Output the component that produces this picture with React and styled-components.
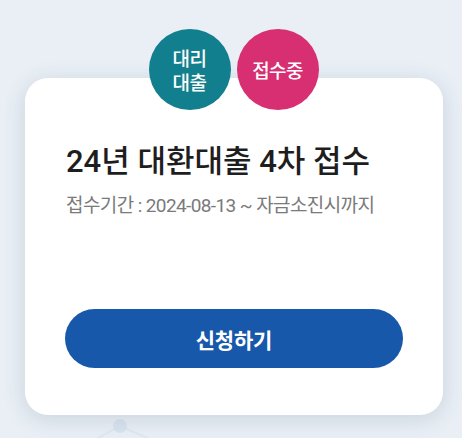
import React from "react";
import styled, { createGlobalStyle } from "styled-components";

const Global = createGlobalStyle`
  html, body {
    margin: 0;
    padding: 0;
    background: #e9eff5;
  }
  body {
    font-family: Roboto, "Noto Sans CJK KR", sans-serif;
    -webkit-font-smoothing: antialiased;
  }
`;

const Page = styled.div`
  position: relative;
  width: 462px;
  height: 438px;
  overflow: hidden;
  padding-top: 29px;
  box-sizing: border-box;
  background: #e9eff5;
`;

const BadgeRow = styled.div`
  position: relative;
  z-index: 2;
  display: flex;
  justify-content: center;
  gap: 6px;
  padding-left: 5px;
  margin: 0 0 -32px 0;
`;

const Badge = styled.div`
  width: 82px;
  height: 81px;
  border-radius: 50%;
  background: ${(p) => p.$color};
  color: #fff;
  display: flex;
  flex-direction: column;
  align-items: center;
  justify-content: center;
  text-align: center;
  font-family: "Noto Sans CJK KR", sans-serif;
  font-weight: 500;
  font-size: 19px;
  line-height: 24px;
  letter-spacing: -0.6px;
`;

const BadgeLine = styled.span`
  display: block;
`;

const Card = styled.div`
  position: relative;
  z-index: 1;
  margin-left: 25px;
  width: 418px;
  height: 337px;
  box-sizing: border-box;
  background: #fff;
  border-radius: 23px;
  box-shadow: 0 4px 22px rgba(40, 60, 100, 0.16);
  padding: 64px 40px 47px 41px;
  display: flex;
  flex-direction: column;
`;

const Title = styled.h2`
  margin: 0;
  font-family: Roboto, "Noto Sans CJK KR", sans-serif;
  font-weight: 500;
  font-size: 31px;
  line-height: 40px;
  color: #1e1e1e;
  letter-spacing: 0;
`;

const Period = styled.p`
  margin: 12px 0 0 0;
  font-family: Roboto, "Noto Sans CJK KR", sans-serif;
  font-weight: 400;
  font-size: 19px;
  line-height: 24px;
  color: #7a7a7a;
  letter-spacing: -0.6px;
`;

const Spacer = styled.div`
  flex: 1;
`;

const ApplyButton = styled.button`
  width: 338px;
  height: 59px;
  margin-left: -1px;
  border: none;
  border-radius: 30px;
  background: #1858aa;
  color: #fff;
  font-family: "Noto Sans CJK KR", sans-serif;
  font-weight: 700;
  font-size: 21px;
  letter-spacing: -0.2px;
  cursor: pointer;
`;

const Deco = styled.svg`
  position: absolute;
  left: 60px;
  bottom: -10px;
  z-index: 0;
`;

export default function App() {
  return (
    <>
      <Global />
      <Page>
        <Deco width="160" height="40" viewBox="0 0 160 40">
          <line x1="20" y1="40" x2="60" y2="18" stroke="#dfe8f0" strokeWidth="2" />
          <line x1="60" y1="18" x2="110" y2="40" stroke="#dfe8f0" strokeWidth="2" />
          <circle cx="60" cy="18" r="7" fill="#d9e4ee" />
        </Deco>
        <BadgeRow>
          <Badge $color="#127f8e">
            <BadgeLine>대리</BadgeLine>
            <BadgeLine>대출</BadgeLine>
          </Badge>
          <Badge $color="#d72f72">접수중</Badge>
        </BadgeRow>
        <Card>
          <Title>24년 대환대출 4차 접수</Title>
          <Period>접수기간 : 2024-08-13 ~ 자금소진시까지</Period>
          <Spacer />
          <ApplyButton>신청하기</ApplyButton>
        </Card>
      </Page>
    </>
  );
}
